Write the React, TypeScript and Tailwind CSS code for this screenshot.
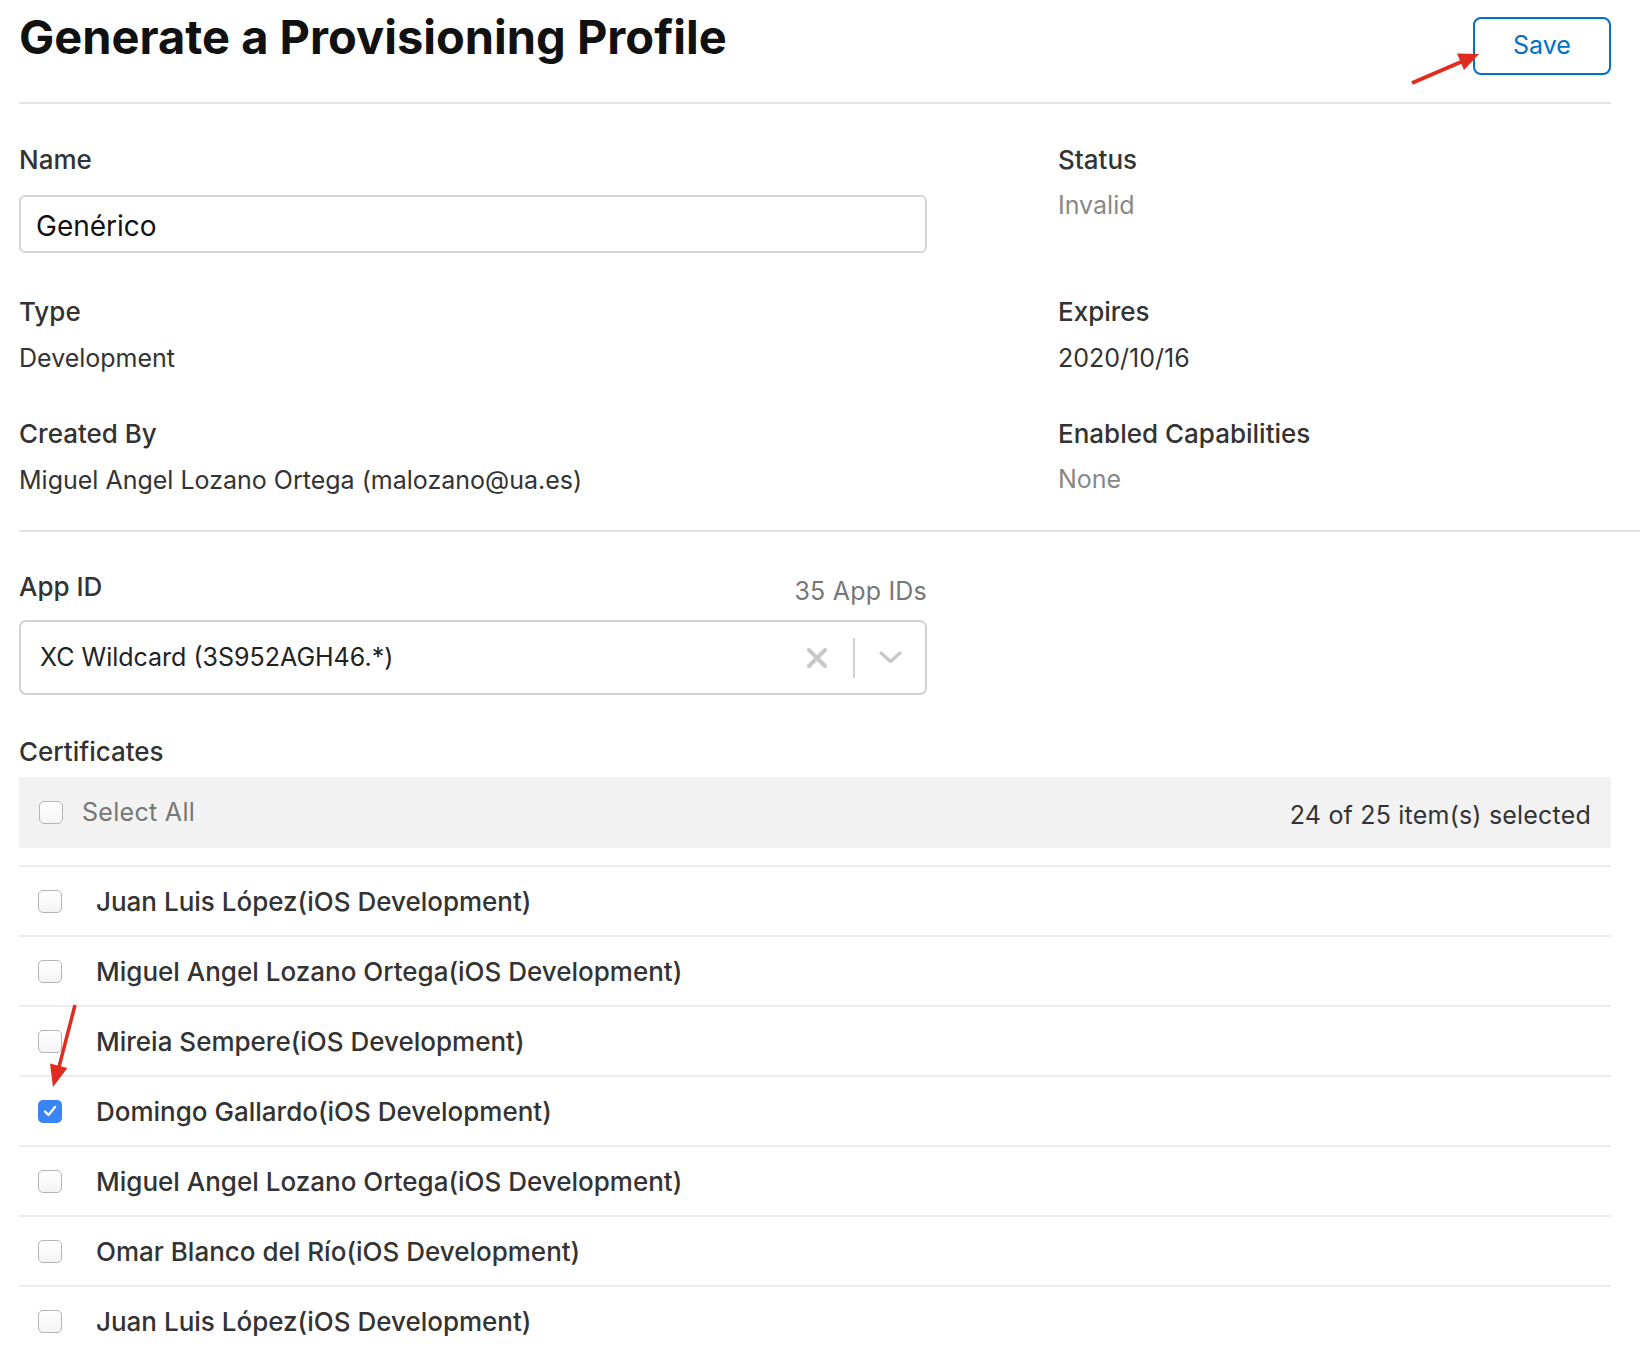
import { FC, ReactNode } from "react";

type Cert = { name: string; checked?: boolean };

const certificates: Cert[] = [
    { name: "Juan Luis López(iOS Development)" },
    { name: "Miguel Angel Lozano Ortega(iOS Development)" },
    { name: "Mireia Sempere(iOS Development)" },
    { name: "Domingo Gallardo(iOS Development)", checked: true },
    { name: "Miguel Angel Lozano Ortega(iOS Development)" },
    { name: "Omar Blanco del Río(iOS Development)" },
    { name: "Juan Luis López(iOS Development)" },
];

const Checkbox: FC<{ checked?: boolean }> = ({ checked }) =>
    checked ? (
        <span className="flex h-[23px] w-[24px] shrink-0 items-center justify-center rounded-[5px] bg-[#3b84f5]">
            <svg width="14" height="12" viewBox="0 0 14 12">
                <path
                    d="M2 6.5 L5.5 10 L12 2"
                    fill="none"
                    stroke="#fff"
                    strokeWidth="2.4"
                    strokeLinecap="round"
                    strokeLinejoin="round"
                />
            </svg>
        </span>
    ) : (
        <span className="block h-[23px] w-[24px] shrink-0 rounded-[5px] border-[1.5px] border-[#b5b5b5] bg-gradient-to-b from-white to-[#f4f4f4]" />
    );

const Label: FC<{ children: ReactNode }> = ({ children }) => (
    <div className="text-[26px] font-medium leading-[30px] text-[#333]">
        {children}
    </div>
);

const Value: FC<{ children: ReactNode; muted?: boolean }> = ({
    children,
    muted,
}) => (
    <div
        className={
            muted
                ? "mt-[15px] text-[25px] leading-[30px] text-[#888]"
                : "mt-[16px] text-[25px] leading-[30px] text-[#333]"
        }
    >
        {children}
    </div>
);

export default function App() {
    return (
        <div className="relative h-[1348px] w-[1640px] overflow-hidden bg-white pl-[19px] font-['Inter',sans-serif] text-[#333]">
            {/* header */}
            <div className="mr-[29px] flex h-[104px] items-start justify-between border-b-2 border-[#e3e3e3]">
                <h1 className="mt-[9px] text-[47px] font-bold leading-[56px] text-[#111]">
                    Generate a Provisioning Profile
                </h1>
                <button className="mt-[17px] h-[58px] w-[138px] rounded-[8px] border-2 border-[#0070c9] text-[25px] text-[#0070c9]">
                    Save
                </button>
            </div>

            {/* details */}
            <div className="mt-[41px] flex">
                <div className="w-[908px]">
                    <Label>Name</Label>
                    <div className="mt-[20px] flex h-[58px] items-center rounded-[6px] border-2 border-[#d5d5d5] pl-[15px] pt-[4px] text-[28px] text-[#111]">
                        Genérico
                    </div>
                </div>
                <div className="ml-[131px]">
                    <Label>Status</Label>
                    <Value muted>Invalid</Value>
                </div>
            </div>
            <div className="mt-[44px] flex">
                <div className="w-[908px]">
                    <Label>Type</Label>
                    <Value>Development</Value>
                </div>
                <div className="ml-[131px]">
                    <Label>Expires</Label>
                    <Value>2020/10/16</Value>
                </div>
            </div>
            <div className="mt-[46px] flex">
                <div className="w-[908px]">
                    <Label>Created By</Label>
                    <Value>Miguel Angel Lozano Ortega (malozano@ua.es)</Value>
                </div>
                <div className="ml-[131px]">
                    <Label>Enabled Capabilities</Label>
                    <Value muted>None</Value>
                </div>
            </div>

            <div className="mt-[35px] h-[2px] bg-[#e3e3e3]" />

            {/* app id */}
            <div className="mt-[40px] flex w-[908px] items-start justify-between">
                <Label>App ID</Label>
                <span className="mt-[4px] text-[25px] leading-[30px] tracking-[0.2px] text-[#777]">
                    35 App IDs
                </span>
            </div>
            <div className="mt-[14px] flex h-[75px] w-[908px] items-center rounded-[7px] border-2 border-[#d2d2d2] pl-[19px] text-[25px] text-[#222]">
                <span>XC Wildcard (3S952AGH46.*)</span>
                <div className="ml-auto mr-[23px] flex items-center">
                    <svg width="20" height="20" viewBox="0 0 20 20">
                        <path
                            d="M2 2 L18 18 M18 2 L2 18"
                            stroke="#c8c8c8"
                            strokeWidth="4"
                            strokeLinecap="round"
                        />
                    </svg>
                    <span className="ml-[26px] h-[40px] w-[2px] bg-[#d0d0d0]" />
                    <svg
                        className="ml-[24px]"
                        width="23"
                        height="13"
                        viewBox="0 0 23 13"
                    >
                        <path
                            d="M2 2 L11.5 10.5 L21 2"
                            fill="none"
                            stroke="#c8c8c8"
                            strokeWidth="3.2"
                            strokeLinecap="round"
                            strokeLinejoin="round"
                        />
                    </svg>
                </div>
            </div>

            {/* certificates */}
            <div className="mt-[42px]">
                <Label>Certificates</Label>
            </div>
            <div className="mr-[29px] mt-[10px] flex h-[71px] items-center bg-[#f2f2f2] px-[20px]">
                <Checkbox />
                <span className="ml-[19px] text-[25px] tracking-[0.3px] text-[#777]">
                    Select All
                </span>
                <span className="ml-auto mt-[6px] text-[25px] tracking-[0.2px] text-[#333]">
                    24 of 25 item(s) selected
                </span>
            </div>
            <div className="mr-[29px] mt-[17px]">
                {certificates.map((c, i) => (
                    <div
                        key={i}
                        className="flex h-[70px] items-center border-t-2 border-[#ececec] pl-[19px]"
                    >
                        <Checkbox checked={c.checked} />
                        <span className="ml-[34px] text-[26px] font-medium text-[#333]">
                            {c.name}
                        </span>
                    </div>
                ))}
            </div>

            {/* annotation arrows */}
            <svg
                className="pointer-events-none absolute left-0 top-0"
                width="1640"
                height="1348"
            >
                <line
                    x1="1412"
                    y1="83"
                    x2="1462"
                    y2="61.5"
                    stroke="#e02b1f"
                    strokeWidth="4"
                />
                <polygon
                    points="1479,54 1464,70 1457,53.6"
                    fill="#e02b1f"
                />
                <line
                    x1="75"
                    y1="1005"
                    x2="59"
                    y2="1067"
                    stroke="#e02b1f"
                    strokeWidth="3.5"
                />
                <polygon points="53,1087 67.4,1068 50,1063.4" fill="#e02b1f" />
            </svg>
        </div>
    );
}
